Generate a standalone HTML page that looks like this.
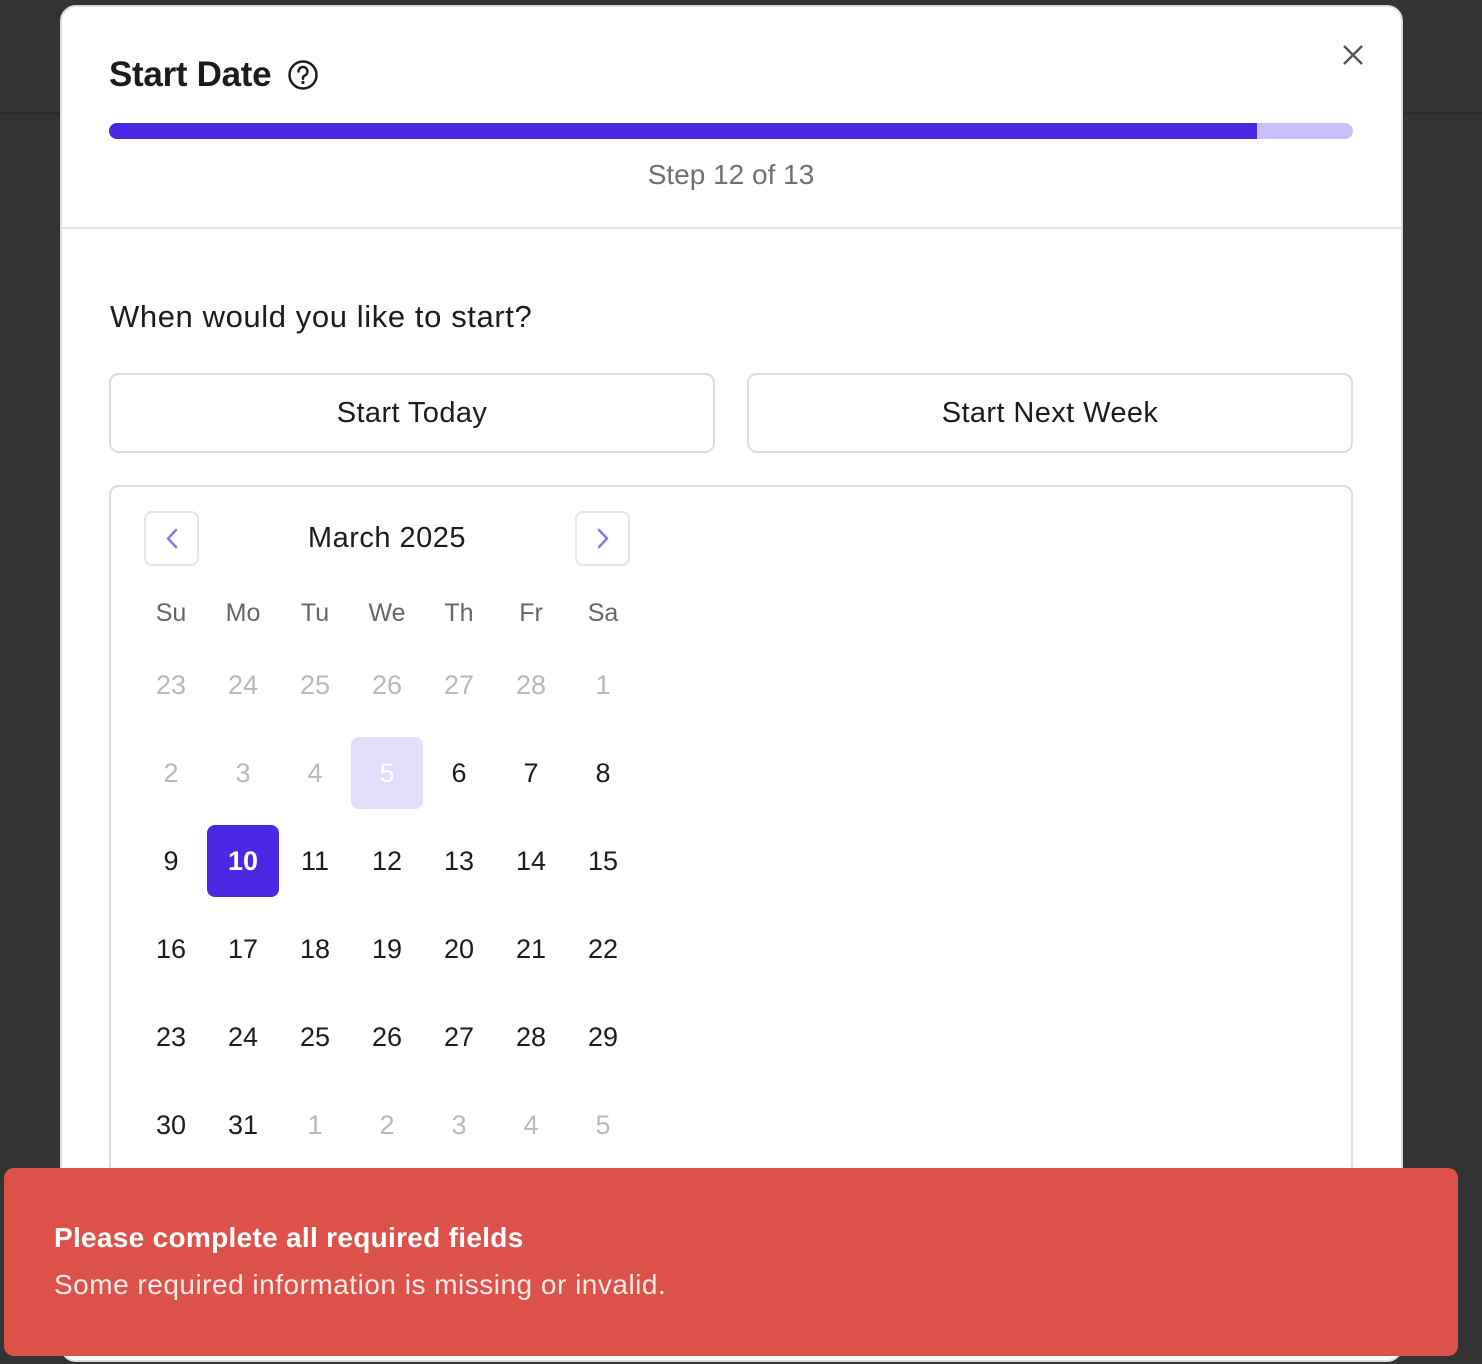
<!DOCTYPE html>
<html><head><meta charset="utf-8"><style>
*{box-sizing:border-box;margin:0;padding:0}
html{overflow:hidden;width:1482px;height:1364px}
body{width:1482px;height:1364px;background:#333;position:relative;overflow:hidden;font-family:"Liberation Sans",sans-serif;color:#1c1c1c}
.a{position:absolute}
.hdrline{left:0;top:112px;width:1482px;height:2px;background:#2c2c2c}
.modal{left:60px;top:5px;width:1343px;height:1357px;background:#fff;border-radius:16px;border:2px solid #ddd}
.c{position:absolute;width:72px;height:72px;display:flex;align-items:center;justify-content:center;font-size:27px;border-radius:8px}
.g{color:#b8b8b8}
.wd{color:#666;font-size:25px}
</style></head><body>
<div class="a hdrline"></div>
<div class="a modal"></div>
<div class="a" style="left:109px;top:55px;font-size:35px;font-weight:bold;letter-spacing:-0.3px">Start Date</div>
<svg class="a" style="left:287px;top:59px" width="32" height="32" viewBox="0 0 32 32"><circle cx="16" cy="16" r="13.5" fill="none" stroke="#1c1c1c" stroke-width="2.5"/><path d="M11.5 12.5a4.5 4.5 0 1 1 6 4.2c-1 .5-1.5 1.2-1.5 2.3v.8" fill="none" stroke="#1c1c1c" stroke-width="2.5" stroke-linecap="round"/><circle cx="16" cy="23.5" r="1.6" fill="#1c1c1c"/></svg>
<svg class="a" style="left:1341px;top:43px" width="24" height="24" viewBox="0 0 24 24"><path d="M3 3L21 21M21 3L3 21" stroke="#555" stroke-width="2.4"/></svg>
<div class="a" style="left:109px;top:123px;width:1244px;height:16px;border-radius:8px;background:#c8bff6;overflow:hidden"><div style="width:1148px;height:16px;background:#4c27e3"></div></div>
<div class="a" style="left:0;top:159px;width:1462px;text-align:center;font-size:28px;color:#707070">Step 12 of 13</div>
<div class="a" style="left:62px;top:227px;width:1339px;height:2px;background:#e2e2e2"></div>
<div class="a" style="left:110px;top:299px;font-size:31px;letter-spacing:0.6px">When would you like to start?</div>
<div class="a" style="left:109px;top:373px;width:606px;height:80px;border:2px solid #ddd;border-radius:10px;display:flex;align-items:center;justify-content:center;font-size:29px;letter-spacing:0.4px">Start Today</div>
<div class="a" style="left:747px;top:373px;width:606px;height:80px;border:2px solid #ddd;border-radius:10px;display:flex;align-items:center;justify-content:center;font-size:29px;letter-spacing:0.4px">Start Next Week</div>
<div class="a" style="left:109px;top:485px;width:1244px;height:870px;border:2px solid #ddd;border-radius:10px"></div>
<div class="a" style="left:144px;top:511px;width:55px;height:55px;border:2px solid #e6e6e6;border-radius:8px"><svg width="51" height="51" viewBox="0 0 51 51"><path d="M30 17L22 25.5L30 34" fill="none" stroke="#8b76ef" stroke-width="2.5" stroke-linecap="round" stroke-linejoin="round"/></svg></div>
<div class="a" style="left:575px;top:511px;width:55px;height:55px;border:2px solid #e6e6e6;border-radius:8px"><svg width="51" height="51" viewBox="0 0 51 51"><path d="M22 17L30 25.5L22 34" fill="none" stroke="#8b76ef" stroke-width="2.5" stroke-linecap="round" stroke-linejoin="round"/></svg></div>
<div class="a" style="left:199px;top:522px;width:376px;text-align:center;font-size:29px;letter-spacing:0.5px">March 2025</div>

<div class="c wd" style="left:135px;top:577px">Su</div><div class="c wd" style="left:207px;top:577px">Mo</div><div class="c wd" style="left:279px;top:577px">Tu</div><div class="c wd" style="left:351px;top:577px">We</div><div class="c wd" style="left:423px;top:577px">Th</div><div class="c wd" style="left:495px;top:577px">Fr</div><div class="c wd" style="left:567px;top:577px">Sa</div>

<div class="c g" style="left:135px;top:649px">23</div><div class="c g" style="left:207px;top:649px">24</div><div class="c g" style="left:279px;top:649px">25</div><div class="c g" style="left:351px;top:649px">26</div><div class="c g" style="left:423px;top:649px">27</div><div class="c g" style="left:495px;top:649px">28</div><div class="c g" style="left:567px;top:649px">1</div>

<div class="c g" style="left:135px;top:737px">2</div><div class="c g" style="left:207px;top:737px">3</div><div class="c g" style="left:279px;top:737px">4</div><div class="c" style="left:351px;top:737px;background:#e3defa;color:#fff">5</div><div class="c" style="left:423px;top:737px">6</div><div class="c" style="left:495px;top:737px">7</div><div class="c" style="left:567px;top:737px">8</div>

<div class="c" style="left:135px;top:825px">9</div><div class="c" style="left:207px;top:825px;background:#4c27e3;color:#fff;font-weight:bold">10</div><div class="c" style="left:279px;top:825px">11</div><div class="c" style="left:351px;top:825px">12</div><div class="c" style="left:423px;top:825px">13</div><div class="c" style="left:495px;top:825px">14</div><div class="c" style="left:567px;top:825px">15</div>

<div class="c" style="left:135px;top:913px">16</div><div class="c" style="left:207px;top:913px">17</div><div class="c" style="left:279px;top:913px">18</div><div class="c" style="left:351px;top:913px">19</div><div class="c" style="left:423px;top:913px">20</div><div class="c" style="left:495px;top:913px">21</div><div class="c" style="left:567px;top:913px">22</div>

<div class="c" style="left:135px;top:1001px">23</div><div class="c" style="left:207px;top:1001px">24</div><div class="c" style="left:279px;top:1001px">25</div><div class="c" style="left:351px;top:1001px">26</div><div class="c" style="left:423px;top:1001px">27</div><div class="c" style="left:495px;top:1001px">28</div><div class="c" style="left:567px;top:1001px">29</div>

<div class="c" style="left:135px;top:1089px">30</div><div class="c" style="left:207px;top:1089px">31</div><div class="c g" style="left:279px;top:1089px">1</div><div class="c g" style="left:351px;top:1089px">2</div><div class="c g" style="left:423px;top:1089px">3</div><div class="c g" style="left:495px;top:1089px">4</div><div class="c g" style="left:567px;top:1089px">5</div>

<div class="a" style="left:4px;top:1168px;width:1454px;height:188px;background:#dc524b;border-radius:10px;color:#fff">
<div class="a" style="left:50px;top:54px;font-size:28px;font-weight:bold;letter-spacing:0.3px">Please complete all required fields</div>
<div class="a" style="left:50px;top:101px;font-size:28px;letter-spacing:0.5px;color:#fbe9e8">Some required information is missing or invalid.</div>
</div>
</body></html>
